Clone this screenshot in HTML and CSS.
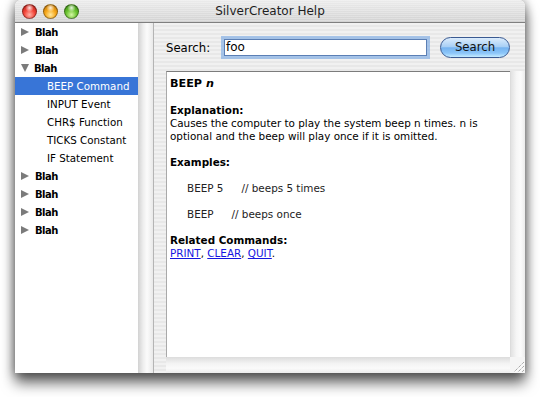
FILE: index.html
```html
<!DOCTYPE html>
<html>
	<head>
		<meta charset="UTF-8">
		<title>SilverCreator Help</title>
		<link rel="stylesheet" href="styles.css">
	</head>
	<body>
		<div class="window">
			<div class="titlebar">
				<div class="lights">
					<span class="light red"></span>
					<span class="light amber"></span>
					<span class="light green"></span>
				</div>
				<div class="title">SilverCreator Help</div>
			</div>
			<div class="body">
				<ul class="tree">
					<li class="group"><span class="tri"></span>Blah</li>
					<li class="group"><span class="tri"></span>Blah</li>
					<li class="group"><span class="tri open"></span>Blah</li>
					<li class="item current">BEEP Command</li>
					<li class="item">INPUT Event</li>
					<li class="item">CHR$ Function</li>
					<li class="item">TICKS Constant</li>
					<li class="item">IF Statement</li>
					<li class="group"><span class="tri"></span>Blah</li>
					<li class="group"><span class="tri"></span>Blah</li>
					<li class="group"><span class="tri"></span>Blah</li>
					<li class="group"><span class="tri"></span>Blah</li>
				</ul>
				<div class="track side"></div>
				<div class="main">
					<div class="searchbar">
						<label class="label">Search:</label>
						<div class="field">foo</div>
						<button class="gel">Search</button>
					</div>
					<div class="scrollview">
						<div class="doc">
							<h1 class="head">BEEP <i>n</i></h1>
							<p><b>Explanation:</b><br>Causes the computer to play the system beep n times. n is optional and the beep will play once if it is omitted.</p>
							<p><b>Examples:</b></p>
							<p class="code"><span>BEEP 5</span><span class="rem">// beeps 5 times</span></p>
							<p class="code"><span>BEEP</span><span class="rem">// beeps once</span></p>
							<p><b>Related Commands:</b><br><a href="#">PRINT</a>, <a href="#">CLEAR</a>, <a href="#">QUIT</a>.</p>
						</div>
						<div class="track vert"></div>
						<div class="track horiz"></div>
						<div class="grow">
							<svg width="15" height="16" viewBox="0 0 15 16">
								<path d="M14 5 L4 15 M14 9 L8 15 M14 13 L12 15" stroke="#8c8c8c" stroke-width="1" stroke-dasharray="1 1"/>
								<path d="M14.5 6 L5 15.5 M14.5 10 L9 15.5" stroke="#ffffff" stroke-width="1"/>
							</svg>
						</div>
					</div>
				</div>
			</div>
		</div>
	</body>
</html>
```

FILE: styles.css
```css
*{
	margin: 0;
	padding: 0;
	box-sizing: border-box;
}
ul{
	list-style: none;
}
html,body{
	background: #fff;
}
body{
	font-family: "DejaVu Sans", Verdana, sans-serif;
	padding: 0 15px 24px;
	min-height: 397px;
}
.window{
	width: 510px;
	height: 373px;
	border-radius: 6px 6px 0 0;
	box-shadow: 0 10px 14px 0 rgba(0,0,0,.6), 0 0 10px 1px rgba(0,0,0,.35);
	display: flex;
	flex-direction: column;
	overflow: hidden;
}
/* title bar */
.titlebar{
	height: 23px;
	flex: none;
	display: grid;
	grid-template-columns: 1fr auto 1fr;
	align-items: center;
	border-bottom: 1px solid #7f7f7f;
	background:
		repeating-linear-gradient(to bottom, rgba(255,255,255,.25) 0 1px, transparent 1px 2px),
		linear-gradient(#ececec, #d2d2d2);
}
.lights{
	display: flex;
	gap: 6px;
	padding-left: 7px;
}
.light{
	width: 15px;
	height: 15px;
	border-radius: 50%;
	border: 1px solid rgba(0,0,0,.35);
}
.light.red{
	background: radial-gradient(circle at 50% 22%, rgba(255,255,255,.85) 0, rgba(255,255,255,0) 35%), radial-gradient(circle at 50% 75%, #ffb3a8 0, #f3473b 45%, #a8150e 100%);
}
.light.amber{
	background: radial-gradient(circle at 50% 22%, rgba(255,255,255,.85) 0, rgba(255,255,255,0) 35%), radial-gradient(circle at 50% 75%, #ffe9a0 0, #f7a81b 45%, #b06a05 100%);
}
.light.green{
	background: radial-gradient(circle at 50% 22%, rgba(255,255,255,.85) 0, rgba(255,255,255,0) 35%), radial-gradient(circle at 50% 75%, #d6f7a6 0, #6cc431 45%, #2e7a0c 100%);
}
.title{
	font-size: 12px;
	color: #1e1e1e;
	padding-bottom: 1px;
}
/* body */
.body{
	flex: 1;
	display: flex;
	min-height: 0;
}
.tree{
	width: 123px;
	flex: none;
	background: #fff;
	font-size: 10.3px;
}
.tree li{
	height: 18px;
	display: flex;
	align-items: center;
	color: #000;
}
.tree .group{
	padding-left: 6px;
	font-weight: bold;
	font-size: 10px;
	letter-spacing: -0.5px;
}
.tree .item{
	padding-left: 32px;
}
.tree .current{
	background: #3875d7;
	color: #fff;
}
.tri{
	width: 0;
	height: 0;
	border-left: 8px solid #7b7b7b;
	border-top: 4.5px solid transparent;
	border-bottom: 4.5px solid transparent;
	margin-right: 6px;
}
.tri.open{
	border-left: 4.5px solid transparent;
	border-right: 4.5px solid transparent;
	border-top: 8px solid #7b7b7b;
	border-bottom: 0;
	margin-right: 5px;
}
.track.side{
	width: 16px;
	flex: none;
	border-right: 1px solid #b4b4b4;
	background: linear-gradient(to right, #d2d2d2, #eeeeee 35%, #fbfbfb 60%, #e9e9e9);
}
.main{
	flex: 1;
	display: flex;
	flex-direction: column;
	padding: 13px 0 0 12px;
	background: repeating-linear-gradient(to bottom, #f1f1f1 0 2px, #e8e8e8 2px 4px);
}
.searchbar{
	height: 23px;
	display: flex;
	align-items: center;
	padding-right: 15px;
}
.label{
	font-size: 11.7px;
	width: 55px;
	color: #000;
}
.field{
	width: 203px;
	height: 17px;
	margin: 3px;
	border: 1px solid #5b7fb5;
	background: #fff;
	box-shadow: 0 0 0 3px rgba(140,180,230,.75);
	font-size: 12px;
	line-height: 15px;
	padding-left: 1px;
	color: #000;
}
.gel{
	margin-left: 10px;
	width: 70px;
	height: 21px;
	border-radius: 11px;
	border: 1px solid #3a5a92;
	background: linear-gradient(#dcecfc 0%, #a9d0f5 45%, #76b3ef 52%, #8cc6f9 80%, #c6ecff 100%);
	font-family: "DejaVu Sans", Verdana, sans-serif;
	font-size: 11.7px;
	color: #111;
	padding-bottom: 1px;
}
.scrollview{
	flex: 1;
	margin-top: 12px;
	display: grid;
	grid-template-columns: 1fr 15px;
	grid-template-rows: 1fr 16px;
	min-height: 0;
}
.doc{
	background: #fff;
	border-top: 1px solid #7c7c7c;
	border-left: 1px solid #a9a9a9;
	padding: 4px 4px 0 3px;
	font-size: 10.4px;
	line-height: 13px;
	color: #000;
	overflow: hidden;
}
.doc .head{
	font-size: 11.2px;
	line-height: 15px;
	margin-bottom: 13px;
}
.doc p{
	margin-bottom: 13px;
}
.doc .code{
	padding-left: 17px;
	color: #222;
}
.doc .rem{
	margin-left: 18px;
}
.doc a{
	color: #1515e0;
}
.track.vert{
	background: linear-gradient(to right, #e2e2e2, #f6f6f6 40%, #fbfbfb 70%, #ececec);
	border-left: 1px solid #dcdcdc;
}
.track.horiz{
	background: linear-gradient(to bottom, #dcdcdc, #f3f3f3 40%, #fafafa 70%, #ececec);
}
.grow{
	background: #f5f5f5;
	display: flex;
}
```
